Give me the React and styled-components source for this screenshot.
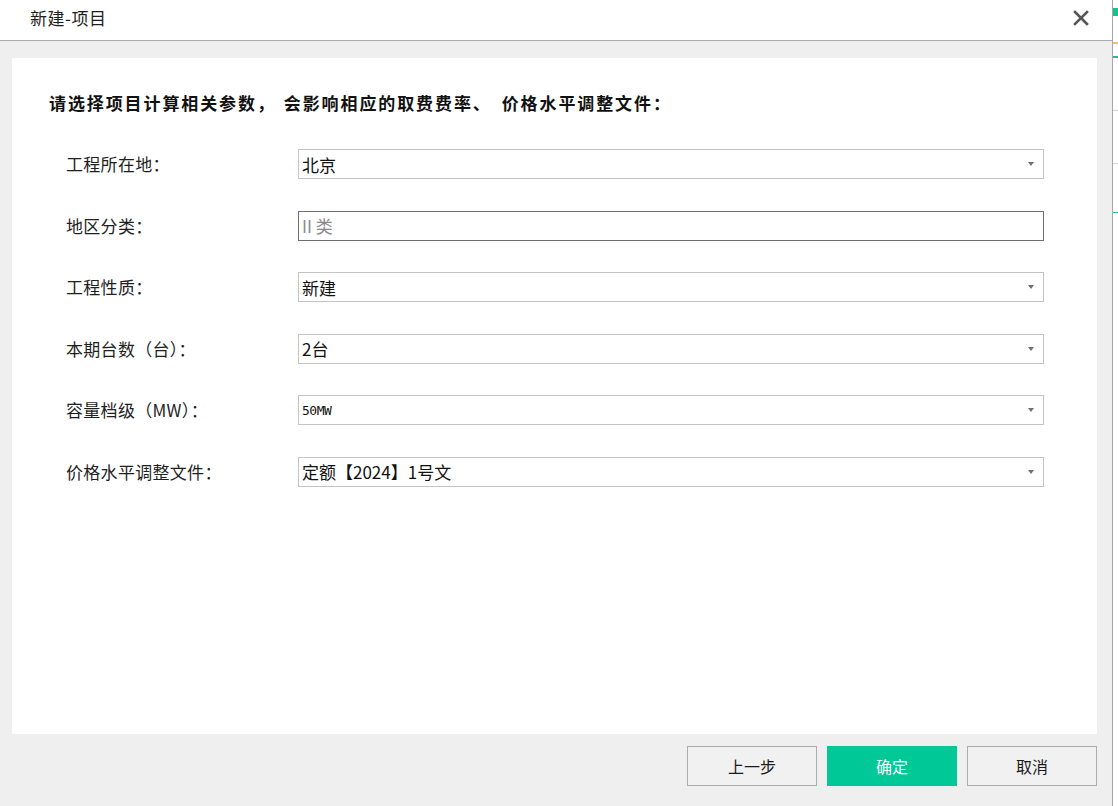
import React from "react";
import styled, { createGlobalStyle } from "styled-components";

const Global = createGlobalStyle`
  html, body { margin: 0; padding: 0; background: #ffffff; }
  body { font-family: "Noto Sans CJK SC", "Noto Sans", sans-serif; color: #1f1f1f; }
  #root { width: 1118px; height: 806px; }
`;

const Screen = styled.div`
  width: 1118px;
  height: 806px;
  display: flex;
  overflow: hidden;
`;

const Dialog = styled.div`
  width: 1113px;
  height: 806px;
  display: flex;
  flex-direction: column;
  border-right: 1px solid #a6a6a6;
  box-sizing: border-box;
`;

const TitleBar = styled.div`
  height: 40px;
  flex: none;
  background: #ffffff;
  border-bottom: 1px solid #acacac;
  display: flex;
  align-items: center;
  justify-content: space-between;
  padding: 0 22px 0 30px;
`;

const Title = styled.div`
  font-size: 17px;
  color: #1e1e1e;
  line-height: 20px;
  margin-top: -4px;
  letter-spacing: 0.5px;
`;

const CloseBtn = styled.div`
  width: 18px;
  height: 18px;
  display: flex;
  align-items: center;
  justify-content: center;
  margin-top: -5px;
`;

const Body = styled.div`
  flex: 1;
  background: #efefef;
  display: flex;
  flex-direction: column;
  padding: 17px 15px 20px 12px;
`;

const Panel = styled.div`
  flex: 1;
  background: #ffffff;
  padding: 33px 0 0 37px;
  display: flex;
  flex-direction: column;
`;

const Heading = styled.div`
  font-size: 17px;
  font-weight: bold;
  line-height: 24px;
  color: #111;
  letter-spacing: 1.9px;
`;

const PunctGap = styled.span`
  display: inline-block;
  width: ${(p) => p.$w}px;
`;

const Form = styled.div`
  margin: 34px 0 0 17px;
  display: grid;
  grid-template-columns: 232px 746px;
  row-gap: 31.6px;
  align-items: center;
`;

const Label = styled.div`
  font-size: 17px;
  color: #1f1f1f;
  line-height: 30px;
  letter-spacing: 0.3px;
`;

const Field = styled.div`
  height: 30px;
  box-sizing: border-box;
  border: 1px solid ${(p) => (p.$disabled ? "#6e6e6e" : "#c4c4c4")};
  background: #ffffff;
  display: flex;
  align-items: center;
  justify-content: space-between;
  padding: 0 9px 0 3px;
`;

const Value = styled.span`
  font-size: ${(p) => (p.$small ? "13px" : "17px")};
  color: ${(p) => (p.$muted ? "#8a8a8a" : "#111")};
  font-family: ${(p) => (p.$small ? '"DejaVu Sans Mono", monospace' : 'inherit')};
  letter-spacing: ${(p) => (p.$small ? "-0.5px" : "0")};
`;

const Caret = styled.span`
  width: 0;
  height: 0;
  border-left: 3.5px solid transparent;
  border-right: 3.5px solid transparent;
  border-top: 4px solid #707070;
`;

const Footer = styled.div`
  flex: none;
  display: flex;
  justify-content: flex-end;
  gap: 10px;
  margin-top: 12px;
`;

const Button = styled.button`
  width: 130px;
  height: 40px;
  box-sizing: border-box;
  border: 1px solid ${(p) => (p.$primary ? "#00c896" : "#acacac")};
  background: ${(p) => (p.$primary ? "#00c896" : "#f1f1f1")};
  color: ${(p) => (p.$primary ? "#ffffff" : "#1a1a1a")};
  font-family: "Noto Sans CJK SC", sans-serif;
  font-size: 16px;
  padding: 0;
  cursor: pointer;
`;

const Backdrop = styled.div`
  flex: 1;
  background: #ffffff;
  display: flex;
  flex-direction: column;
  padding-top: 8px;
  gap: 12px;
`;

const Mark = styled.div`
  height: ${(p) => p.$h}px;
  background: ${(p) => p.$c};
  margin-top: ${(p) => p.$mt || 0}px;
`;

const rows = [
  { label: "工程所在地：", value: "北京" },
  { label: "地区分类：", value: "II 类", disabled: true },
  { label: "工程性质：", value: "新建" },
  { label: "本期台数（台）：", value: "2台" },
  { label: "容量档级（MW）：", value: "50MW", small: true },
  { label: "价格水平调整文件：", value: "定额【2024】1号文" },
];

export default function App() {
  return (
    <>
      <Global />
      <Screen>
        <Dialog>
          <TitleBar>
            <Title>新建-项目</Title>
            <CloseBtn>
              <svg width="16" height="16" viewBox="0 0 16 16">
                <path d="M2 2 L14 14 M14 2 L2 14" stroke="#555" strokeWidth="2.6" strokeLinecap="square" />
              </svg>
            </CloseBtn>
          </TitleBar>
          <Body>
            <Panel>
              <Heading>
                请选择项目计算相关参数，<PunctGap $w={8} />会影响相应的取费费率、<PunctGap $w={10} />价格水平调整文件：
              </Heading>
              <Form>
                {rows.map((r) => (
                  <React.Fragment key={r.label}>
                    <Label>{r.label}</Label>
                    <Field $disabled={r.disabled}>
                      <Value $muted={r.disabled} $small={r.small}>{r.value}</Value>
                      {!r.disabled && <Caret />}
                    </Field>
                  </React.Fragment>
                ))}
              </Form>
            </Panel>
            <Footer>
              <Button>上一步</Button>
              <Button $primary>确定</Button>
              <Button>取消</Button>
            </Footer>
          </Body>
        </Dialog>
        <Backdrop>
          <Mark $h={8} $c="#19c08f" />
          <Mark $h={2} $c="#f0c070" $mt={14} />
          <Mark $h={2} $c="#19c08f" />
          <Mark $h={1} $c="#d0d0d0" $mt={40} />
          <Mark $h={1} $c="#d0d0d0" $mt={40} />
          <Mark $h={1} $c="#19c08f" $mt={36} />
        </Backdrop>
      </Screen>
    </>
  );
}
